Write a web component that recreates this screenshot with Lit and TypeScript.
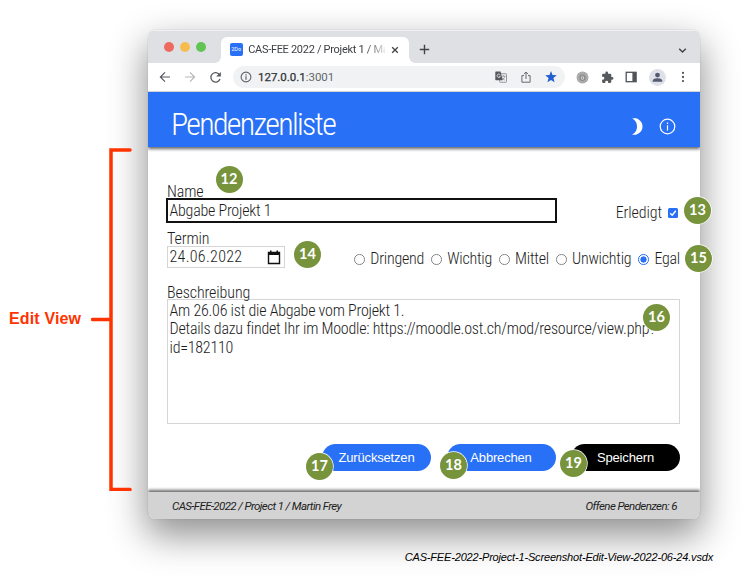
import { LitElement, html, css } from "lit";
import { customElement } from "lit/decorators.js";
import { styleMap } from "lit/directives/style-map.js";

const PRIORITIES = ["Dringend", "Wichtig", "Mittel", "Unwichtig", "Egal"];

const MARKERS = [
  { no: 12, x: 229, y: 179.5 },
  { no: 13, x: 697.5, y: 210.5 },
  { no: 14, x: 307.5, y: 254 },
  { no: 15, x: 698.5, y: 258 },
  { no: 16, x: 656.5, y: 317.5 },
  { no: 17, x: 319.5, y: 466.5 },
  { no: 18, x: 453.5, y: 465 },
  { no: 19, x: 573.5, y: 463 },
];

@customElement("browser-chrome")
export class BrowserChrome extends LitElement {
  static styles = css`
    :host { display: block; font-family: Roboto, "Liberation Sans", sans-serif; }
    svg { display: block; flex: none; }
    .tabs { display: flex; height: 33px; background: #dee0e4; align-items: flex-end; box-shadow: inset 0 1px #f0f1f3; }
    .lights { display: flex; gap: 5.7px; padding: 0 15px 11px 16.3px; }
    .light { width: 10px; height: 10px; border-radius: 50%; }
    .red { background: #ec6a5e; }
    .yellow { background: #f5bd4f; }
    .green { background: #61c454; }
    .tab { position: relative; display: flex; align-items: center; box-sizing: border-box; width: 188px; height: 26.5px; padding: 0 8px 0 9px; background: #fff; border-radius: 6px 6px 0 0; }
    .tab::before, .tab::after { content: ""; position: absolute; bottom: 0; width: 6px; height: 6px; }
    .tab::before { left: -6px; background: radial-gradient(circle at 0 0, transparent 5.5px, #fff 6px); }
    .tab::after { right: -6px; background: radial-gradient(circle at 100% 0, transparent 5.5px, #fff 6px); }
    .favicon { width: 13px; height: 13px; border-radius: 2px; background: #2870f6; color: #fff; font-size: 5.5px; line-height: 13px; text-align: center; }
    .title { margin-left: 5.5px; width: 136.5px; white-space: nowrap; font-size: 11px; letter-spacing: -0.3px; color: #3d4044; line-height: 20px; -webkit-mask-image: linear-gradient(90deg, #000 86%, rgba(0, 0, 0, 0.15) 100%); mask-image: linear-gradient(90deg, #000 86%, rgba(0, 0, 0, 0.15) 100%); }
    .close { margin-left: 6px; }
    .plus { margin: 0 0 8px 10px; }
    .chev { margin: 0 12px 7px auto; }
    .bar { display: flex; align-items: center; height: 28px; background: #fff; border-bottom: 1px solid #d8dae0; }
    .back { margin-left: 11px; }
    .fwd { margin-left: 13px; }
    .reload { margin-left: 13px; }
    .omni { display: flex; align-items: center; margin-left: 11px; width: 332px; height: 22px; border-radius: 11px; background: #f0f2f4; box-sizing: border-box; padding: 0 8px 0 7px; }
    .url { margin-left: 6px; font-size: 11.5px; color: #63676b; letter-spacing: -0.02px; flex: 1; }
    .host { color: #303236; -webkit-text-stroke: 0.25px #303236; }
    .share { margin: 0 13px 0 13px; }
    .ext { display: flex; align-items: center; justify-content: space-between; width: 113px; margin-left: 11px; }
    .avatar { width: 17px; height: 17px; border-radius: 50%; background: #dfe1e8; }
  `;

  render() {
    return html`
      <div class="tabs">
        <div class="lights"><div class="light red"></div><div class="light yellow"></div><div class="light green"></div></div>
        <div class="tab">
          <div class="favicon">2Do</div>
          <div class="title">CAS-FEE 2022 / Projekt 1 / Mar</div>
          <svg class="close" width="8" height="8" viewBox="0 0 8 8"><path d="M1.2 1.2l5.6 5.6M6.8 1.2L1.2 6.8" stroke="#404347" stroke-width="1.3"/></svg>
        </div>
        <svg class="plus" width="11" height="11" viewBox="0 0 11 11"><path d="M5.5 .8v9.4M.8 5.5h9.4" stroke="#404347" stroke-width="1.4"/></svg>
        <svg class="chev" width="11" height="11" viewBox="0 0 11 11"><path d="M2.2 3.8L5.5 7l3.3-3.2" fill="none" stroke="#404347" stroke-width="1.4"/></svg>
      </div>
      <div class="bar">
        <svg class="back" width="12" height="12" viewBox="0 0 12 12"><path d="M11 6H1.6M6 1.4L1.4 6 6 10.6" fill="none" stroke="#56595e" stroke-width="1.2"/></svg>
        <svg class="fwd" width="12" height="12" viewBox="0 0 12 12"><path d="M1 6h9.4M6 1.4L10.6 6 6 10.6" fill="none" stroke="#b5b7ba" stroke-width="1.2"/></svg>
        <svg class="reload" width="13" height="13" viewBox="0 0 13 13"><path d="M10.4 3.6A4.7 4.7 0 1 0 11 8" fill="none" stroke="#56595e" stroke-width="1.3"/><path d="M11.8 .9v4.7H7.1z" fill="#56595e"/></svg>
        <div class="omni">
          <svg width="12" height="12" viewBox="0 0 12 12"><circle cx="6" cy="6" r="4.9" fill="none" stroke="#5f6368" stroke-width="1.1"/><path d="M6 5.3v3.4M6 3.2v1.2" stroke="#5f6368" stroke-width="1.2"/></svg>
          <div class="url"><span class="host">127.0.0.1</span>:3001</div>
          <svg width="12" height="12" viewBox="0 0 12 12"><rect x="4.7" y="2.7" width="6.8" height="8.6" rx=".6" fill="none" stroke="#8b8e92" stroke-width=".9"/><path d="M6.4 5.2h4M8.3 4.3v1M10 5.3C9.5 7 8 8.4 6.8 9M6.8 6.3c.6 1.3 1.8 2.3 3 2.8" fill="none" stroke="#85888c" stroke-width=".8"/><path d="M.9.6h4.7l2 8.6H.9a.6.6 0 0 1-.6-.6V1.2A.6.6 0 0 1 .9.6z" fill="#55585d"/><path d="M5.2 3.8A1.7 1.7 0 1 0 5.4 5.2H3.8" fill="none" stroke="#e8e9eb" stroke-width=".8"/></svg>
          <svg class="share" width="12" height="12" viewBox="0 0 12 12"><path d="M4 4.6H1.9v6.6h8.2V4.6H8M6 8V1.2M3.9 3.1L6 1l2.1 2.1" fill="none" stroke="#66696d" stroke-width="1"/></svg>
          <svg width="12" height="12" viewBox="0 0 12 12"><path d="M6 .1l1.500 4 4.300.2-3.400 2.700 1.200 4.300L6 8.900l-3.600 2.400L3.600 7 .2 4.300l4.300-.2z" fill="#1f5fd0"/></svg>
        </div>
        <div class="ext">
          <svg width="13" height="13" viewBox="0 0 13 13"><circle cx="6.5" cy="6.5" r="5.9" fill="#a0a0a0"/><circle cx="6.5" cy="6.5" r="4.6" fill="none" stroke="#cfcfcf" stroke-width="1" stroke-dasharray="1 1"/><circle cx="6.5" cy="7" r="2.800" fill="#858585"/><circle cx="6.5" cy="7" r="1.800" fill="#e0e0e0"/><path d="M5.500 7h2M6.500 6v2" stroke="#858585" stroke-width=".7"/></svg>
          <svg width="13" height="13" viewBox="0 0 24 24"><path d="M20.5 11H19V7c0-1.100-.9-2-2-2h-4V3.500a2.500 2.500 0 0 0-5 0V5H4c-1.100 0-2 .9-2 2v3.800h1.500a2.700 2.700 0 0 1 0 5.400H2V20c0 1.100.9 2 2 2h3.800v-1.500a2.700 2.700 0 0 1 5.400 0V22H17c1.100 0 2-.9 2-2v-4h1.500a2.500 2.500 0 0 0 0-5z" fill="#56595e"/></svg>
          <svg width="12" height="12" viewBox="0 0 12 12"><rect x="1.2" y="1.3" width="9.800" height="9.400" fill="#fff" stroke="#505358" stroke-width="1.300"/><path d="M7.400 1h4v10h-4z" fill="#505358"/></svg>
          <svg class="avatar" viewBox="0 0 17 17"><circle cx="8.5" cy="6.100" r="2.400" fill="#555b70"/><path d="M3.700 12.700v-.9C3.700 10 6.800 9.300 8.500 9.300s4.800.7 4.800 2.500v.9z" fill="#555b70"/></svg>
          <svg width="12" height="12" viewBox="0 0 12 12" fill="#56595e"><circle cx="6" cy="1.900" r="1.150"/><circle cx="6" cy="6" r="1.150"/><circle cx="6" cy="10.100" r="1.150"/></svg>
        </div>
      </div>
    `;
  }
}

@customElement("edit-form")
export class EditForm extends LitElement {
  static styles = css`
    :host { display: flex; flex-direction: column; flex: 1; box-sizing: border-box; padding: 36px 20px 0 18.500px; font: 300 16px/18.300px Roboto, "Liberation Sans", sans-serif; font-stretch: 75%; letter-spacing: -0.230px; color: #1c1c1c; }
    .row { display: flex; justify-content: space-between; align-items: flex-end; }
    .label { height: 15px; line-height: 18px; padding-left: 0.500px; letter-spacing: -0.100px; }
    .name { box-sizing: border-box; width: 391px; height: 25px; margin-left: -1px; border: 2px solid #111; padding-left: 2px; line-height: 22px; white-space: nowrap; }
    .done { display: flex; align-items: center; gap: 6px; height: 20px; padding-right: 2px; letter-spacing: -0.100px; }
    .check { display: block; width: 10px; height: 10px; }
    .second { margin-top: 7px; }
    .second .label { height: 16px; }
    .date { display: flex; justify-content: space-between; align-items: center; box-sizing: border-box; width: 118.500px; height: 22px; border: 1px solid #d5d5d5; padding: 0 3px 0 2px; letter-spacing: 0.300px; }
    .prios { display: flex; gap: 7px; height: 17px; align-items: center; }
    .prio { display: flex; align-items: center; gap: 5.500px; }
    .radio { box-sizing: border-box; width: 10.500px; height: 10.500px; border: 1px solid #868686; border-radius: 50%; }
    .radio.on { border-color: #2870f6; background: radial-gradient(circle, #2870f6 2.800px, #fff 3.400px); }
    .third { margin-top: 16px; }
    .text { box-sizing: border-box; height: 125px; border: 1px solid #d5d5d5; padding: 2px 2px; white-space: pre-wrap; }
    .actions { display: flex; justify-content: flex-end; gap: 15.500px; margin-top: 20px; }
    .button { width: 109px; height: 27px; border: 0; padding: 0; border-radius: 13.500px; background: #2870f6; color: #fff; font: 13px "Liberation Sans", Arial, sans-serif; letter-spacing: -0.180px; }
    .primary { background: #000; }
  `;

  render() {
    return html`
      <div class="row">
        <div><div class="label">Name</div><div class="name">Abgabe Projekt 1</div></div>
        <div class="done">Erledigt
          <svg class="check" viewBox="0 0 10 10"><rect width="10" height="10" rx="1.500" fill="#2870f6"/><path d="M2.200 5.300l2 2 3.600-4.600" fill="none" stroke="#fff" stroke-width="1.400"/></svg>
        </div>
      </div>
      <div class="row second">
        <div>
          <div class="label">Termin</div>
          <div class="date">24.06.2022
            <svg width="14" height="15" viewBox="0 0 14 15"><path d="M1.500 2.500h11v11h-11z" fill="none" stroke="#111" stroke-width="1.400"/><path d="M1 2h12v3H1zM3 .6h1.500V3H3zM9.500.6H11V3H9.500z" fill="#111"/></svg>
          </div>
        </div>
        <div class="prios">
          ${PRIORITIES.map((p) => html`<div class="prio"><div class="radio ${p === "Egal" ? "on" : ""}"></div>${p}</div>`)}
        </div>
      </div>
      <div class="third">
        <div class="label">Beschreibung</div>
        <div class="text">Am 26.06 ist die Abgabe vom Projekt 1.
Details dazu findet Ihr im Moodle: https://moodle.ost.ch/mod/resource/view.php?
id=182110</div>
      </div>
      <div class="actions">
        <button class="button">Zurücksetzen</button>
        <button class="button">Abbrechen</button>
        <button class="button primary">Speichern</button>
      </div>
    `;
  }
}

@customElement("app-root")
export class AppRoot extends LitElement {
  static styles = css`
    :host { display: flex; flex-direction: column; position: relative; box-sizing: border-box; width: 744px; height: 578px; overflow: hidden; background: #fff; padding-top: 30px; font-family: Roboto, "Liberation Sans", sans-serif; }
    .stage { display: flex; }
    .side { display: flex; width: 148px; flex: none; padding-top: 118px; height: 343px; z-index: 1; }
    .caption { width: 91px; padding-left: 9px; box-sizing: border-box; align-self: center; white-space: nowrap; font: bold 16px/20px "Liberation Sans", Arial, sans-serif; color: #ff3300; padding-bottom: 2px; letter-spacing: 0.150px; }
    .bracket { display: block; flex: none; }
    .window { display: flex; flex-direction: column; width: 552px; height: 489px; border-radius: 8px; overflow: hidden; background: #fff; }
    .shadow { border-radius: 8px; box-shadow: 0 0 1px rgba(0, 0, 0, 0.350), 0 15px 36px 2px rgba(0, 0, 0, 0.430); }
    .header { display: flex; align-items: center; height: 55px; flex: none; background: #2870f6; color: #fff; padding: 0 24.500px 0 23px; box-shadow: 0 2px 3px rgba(0, 0, 0, 0.600); z-index: 1; }
    .heading { flex: 1; margin: 0; padding-top: 8px; font-size: 32px; line-height: 36px; font-weight: 300; font-stretch: 75%; letter-spacing: -1.720px; }
    .icon { display: block; margin-top: 14px; }
    .info { margin-left: 15px; }
    .footer { display: flex; justify-content: space-between; align-items: center; box-sizing: border-box; height: 27px; flex: none; padding: 0 23px 0 24px; background: #d3d3d3; color: #222; font-size: 11.500px; font-style: italic; font-weight: 400; letter-spacing: -0.600px; box-shadow: 0 -2px 3px rgba(0, 0, 0, 0.600); z-index: 1; }
    .file { align-self: flex-end; margin: 31px 31px 0 0; font: italic 11px/14px "Liberation Sans", Arial, sans-serif; letter-spacing: -0.170px; color: #000; z-index: 1; }
    .marker { position: absolute; z-index: 2; width: 27px; height: 27px; margin: -13.500px 0 0 -13.500px; border-radius: 50%; background: #77933c; box-shadow: 0 0 0 0.700px #fff; color: #fff; text-align: center; font: bold 14.500px/26px Lato, "Open Sans", sans-serif; }
  `;

  render() {
    return html`
      <div class="stage">
        <div class="side">
          <div class="caption">Edit View</div>
          <svg class="bracket" width="41" height="343" viewBox="0 0 41 343"><path d="M39 2H20v339.500h19M1.500 171.500H20" fill="none" stroke="#ff3300" stroke-width="3.500" stroke-linecap="round"/></svg>
        </div>
        <div class="shadow">
          <div class="window">
            <browser-chrome></browser-chrome>
            <div class="header">
              <h1 class="heading">Pendenzenliste</h1>
              <svg class="icon" width="17" height="17" viewBox="0 0 17 17"><path d="M5 .5a8.300 8.300 0 1 1 0 16c3-1 5-4.300 5-8s-2-7-5-8z" fill="#fff"/></svg>
              <svg class="icon info" width="17" height="17" viewBox="0 0 17 17"><circle cx="8.500" cy="8.500" r="7.300" fill="none" stroke="#fff" stroke-width="1.200"/><path d="M8.500 7.300V12.500M8.500 4.400v1.500" stroke="#fff" stroke-width="1.200"/></svg>
            </div>
            <edit-form></edit-form>
            <div class="footer"><span>CAS-FEE-2022 / Project 1 / Martin Frey</span><span>Offene Pendenzen: 6</span></div>
          </div>
        </div>
      </div>
      <div class="file">CAS-FEE-2022-Project-1-Screenshot-Edit-View-2022-06-24.vsdx</div>
      ${MARKERS.map((m) => html`<div class="marker" style=${styleMap({ left: `${m.x}px`, top: `${m.y}px` })}>${m.no}</div>`)}
    `;
  }
}
